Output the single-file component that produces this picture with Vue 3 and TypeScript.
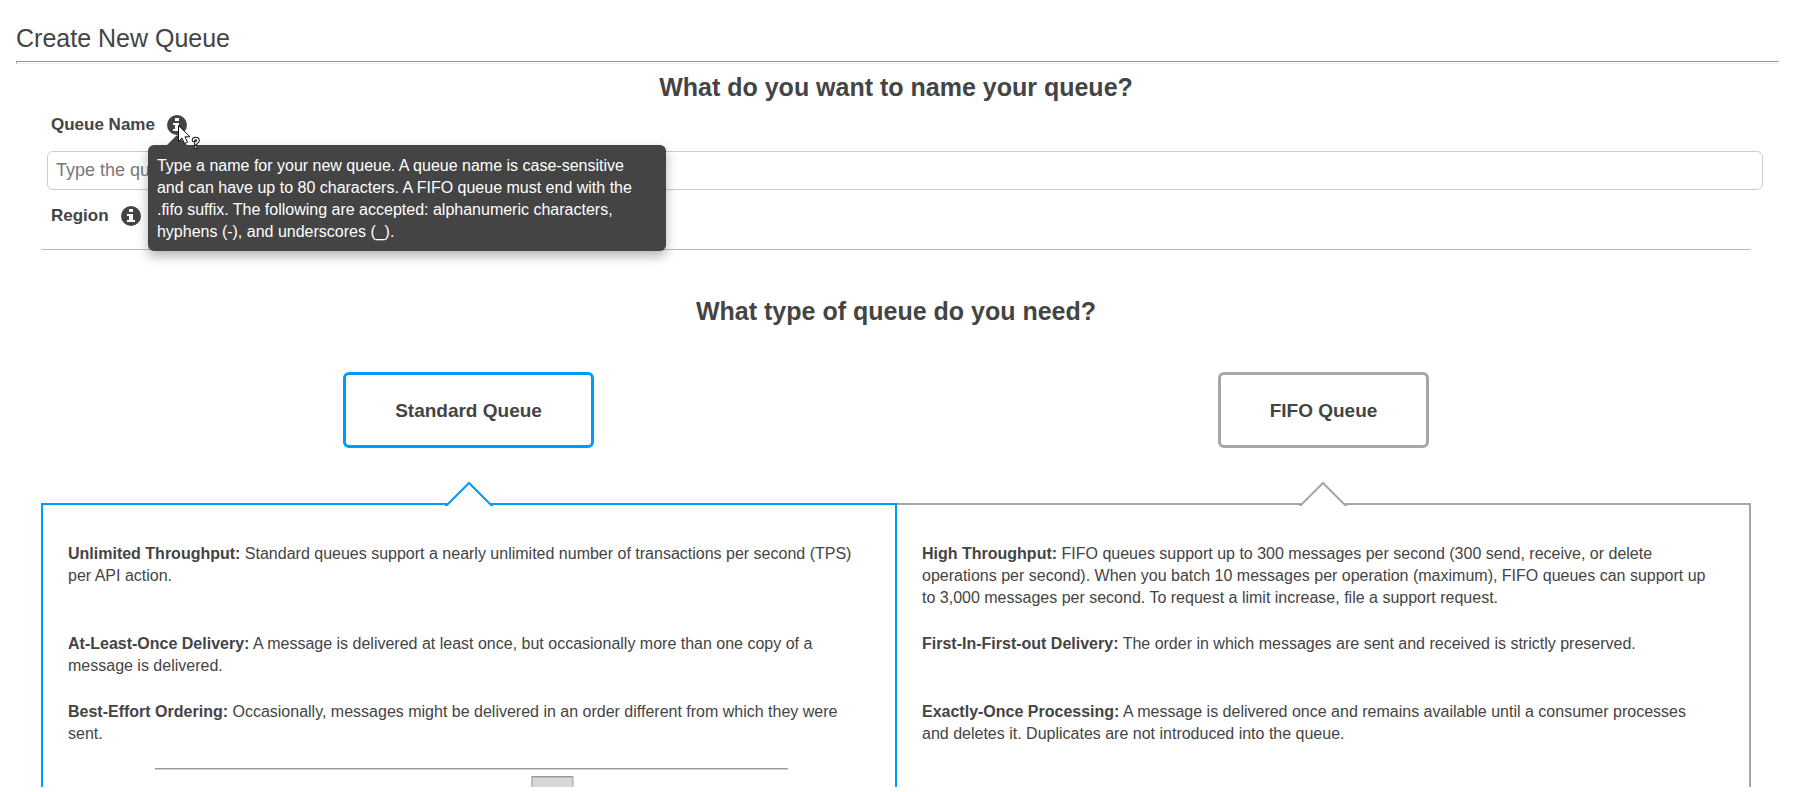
<script setup lang="ts">
import { ref } from 'vue'

type QueueType = 'standard' | 'fifo'

interface Feature {
  term: string
  text: string
}

interface QueueOption {
  id: QueueType
  label: string
  features: Feature[]
}

const queueName = ref('')
const selected = ref<QueueType>('standard')

const options: QueueOption[] = [
  {
    id: 'standard',
    label: 'Standard Queue',
    features: [
      {
        term: 'Unlimited Throughput:',
        text: 'Standard queues support a nearly unlimited number of transactions per second (TPS) per API action.',
      },
      {
        term: 'At-Least-Once Delivery:',
        text: 'A message is delivered at least once, but occasionally more than one copy of a message is delivered.',
      },
      {
        term: 'Best-Effort Ordering:',
        text: 'Occasionally, messages might be delivered in an order different from which they were sent.',
      },
    ],
  },
  {
    id: 'fifo',
    label: 'FIFO Queue',
    features: [
      {
        term: 'High Throughput:',
        text: 'FIFO queues support up to 300 messages per second (300 send, receive, or delete operations per second). When you batch 10 messages per operation (maximum), FIFO queues can support up to 3,000 messages per second. To request a limit increase, file a support request.',
      },
      {
        term: 'First-In-First-out Delivery:',
        text: 'The order in which messages are sent and received is strictly preserved.',
      },
      {
        term: 'Exactly-Once Processing:',
        text: 'A message is delivered once and remains available until a consumer processes and deletes it. Duplicates are not introduced into the queue.',
      },
    ],
  },
]
</script>

<template>
  <div class="page">
    <header class="page-header">
      <h1>Create New Queue</h1>
      <hr class="inset-rule" />
    </header>

    <main>
      <section class="name-section">
        <h2>What do you want to name your queue?</h2>
        <div class="field-label">
          <label for="queue-name">Queue Name</label>
          <span class="help">
            <button type="button" class="info" aria-label="About queue name" aria-describedby="name-tip">
              <svg viewBox="0 0 20 20" width="20" height="20" aria-hidden="true">
                <circle cx="10" cy="10" r="10" fill="#444" />
                <path d="M8 3h4v3H8zM6 8h6v6h2v2H6v-2h2v-4H6z" fill="#fff" />
              </svg>
            </button>
            <span id="name-tip" class="tooltip" role="tooltip">
              Type a name for your new queue. A queue name is case-sensitive and can have up to 80 characters. A FIFO
              queue must end with the .fifo suffix. The following are accepted: alphanumeric characters, hyphens (-),
              and underscores (_).
            </span>
            <svg class="pointer" viewBox="0 0 24 26" width="24" height="26" aria-hidden="true">
              <path d="M.5 .5v16l3.500-3.500 2.500 5.500 3-1.300-2.500-5.400h5z" fill="#fff" stroke="#111" />
              <g fill="none" stroke-linecap="round" stroke-linejoin="round">
                <path d="M15.500 15.500c0-2.700 4.500-2.700 4.500 0 0 1.600-2.300 1.700-2.300 3.300M17.700 21.900v.2" stroke="#111" stroke-width="3.600" />
                <path d="M15.500 15.500c0-2.700 4.500-2.700 4.500 0 0 1.600-2.300 1.700-2.300 3.300M17.700 21.900v.2" stroke="#fff" stroke-width="1.600" />
              </g>
            </svg>
          </span>
        </div>
        <input id="queue-name" v-model="queueName" type="text" placeholder="Type the queue name" />
        <div class="field-label region">
          <span>Region</span>
          <button type="button" class="info" aria-label="About region">
            <svg viewBox="0 0 20 20" width="20" height="20" aria-hidden="true">
              <circle cx="10" cy="10" r="10" fill="#444" />
              <path d="M8 3h4v3H8zM6 8h6v6h2v2H6v-2h2v-4H6z" fill="#fff" />
            </svg>
          </button>
        </div>
      </section>

      <section>
        <h2>What type of queue do you need?</h2>
        <div class="choices">
          <div v-for="option in options" :key="option.id" class="choice">
            <button
              type="button"
              class="choice-button"
              :class="{ active: selected === option.id }"
              :aria-pressed="selected === option.id"
              @click="selected = option.id"
            >
              {{ option.label }}
            </button>
          </div>
        </div>

        <div class="panels">
          <article
            v-for="option in options"
            :key="option.id"
            class="panel"
            :class="{ active: selected === option.id }"
          >
            <svg class="notch" viewBox="0 0 50 26" width="50" height="26" aria-hidden="true">
              <path d="M3 23L25 1l22 22v3H3z" fill="#fff" />
              <path d="M1 24h2L25 2l22 22h2" fill="none" stroke="currentColor" stroke-width="2" />
            </svg>
            <p v-for="feature in option.features" :key="feature.term">
              <strong>{{ feature.term }}</strong> {{ feature.text }}
            </p>
            <svg
              v-if="option.id === 'standard'"
              class="diagram"
              viewBox="0 0 634 19"
              preserveAspectRatio="xMidYMin slice"
              aria-hidden="true"
            >
              <path d="M0 .5h634" stroke="#999" />
              <path d="M0 1.500h634" stroke="#d0d0d0" />
              <rect x="377.500" y="8.500" width="41" height="30" fill="#d8d8d8" stroke="#999" />
              <path d="M378 9.500h40" stroke="#bbb" />
            </svg>
          </article>
        </div>
      </section>
    </main>
  </div>
</template>

<style>
body {
  margin: 0;
  background: #fff;
}
</style>

<style scoped>
.page {
  font-family: 'Liberation Sans', Arial, sans-serif;
  font-size: 16px;
  line-height: 22px;
  color: #444;
}

.page-header {
  padding: 23px 23px 0 16px;
}

h1 {
  margin: 0 0 8px;
  font-size: 25px;
  font-weight: 400;
  line-height: 30px;
}

.inset-rule {
  margin: 0;
  height: 1px;
  border: 1px solid;
  border-color: #999 #eee #eee #999;
}

main {
  padding: 7px 51px 0 41px;
}

h2 {
  margin: 0;
  font-size: 25px;
  font-weight: 700;
  line-height: 32px;
  text-align: center;
}

.name-section {
  margin-bottom: 45px;
  padding-bottom: 22px;
  border-bottom: 1px solid #bbb;
}

.field-label {
  display: flex;
  align-items: center;
  gap: 12px;
  margin: 11px 0 15px 10px;
  font-size: 17px;
  font-weight: 700;
}

.field-label.region {
  margin: 15px 0 0 10px;
}

.help {
  position: relative;
  display: flex;
}

.info {
  display: flex;
  padding: 0;
  border: 0;
  border-radius: 50%;
  background: none;
  cursor: help;
}

.tooltip {
  position: absolute;
  z-index: 1;
  top: 30px;
  left: -19px;
  box-sizing: border-box;
  width: 518px;
  padding: 10px 24px 8px 9px;
  border-radius: 6px;
  background: #444;
  box-shadow: 0 5px 12px rgba(0, 0, 0, 0.3);
  color: #fff;
  font-size: 16px;
  font-weight: 400;
}

.tooltip::before {
  content: '';
  position: absolute;
  bottom: 100%;
  left: 19px;
  border: 10px solid transparent;
  border-top: 0;
  border-bottom-color: #444;
}

.pointer {
  position: absolute;
  z-index: 2;
  top: 10px;
  left: 11px;
}

input {
  display: block;
  box-sizing: border-box;
  width: calc(100% + 6px);
  height: 39px;
  margin: 0 0 0 6px;
  padding: 0 8px;
  border: 1px solid #ccc;
  border-radius: 6px;
  background: #fff;
  color: #444;
  font: inherit;
  font-size: 18px;
}

input::placeholder {
  color: #777;
  opacity: 1;
}

.choices {
  display: grid;
  grid-template-columns: 1fr 1fr;
  margin: 45px 0 55px;
}

.choice {
  display: flex;
  justify-content: center;
}

.choice-button {
  padding: 25px 49px 23px;
  border: 3px solid #a6a6a6;
  border-radius: 6px;
  background: #fff;
  color: #444;
  font: inherit;
  font-size: 19px;
  font-weight: 700;
  cursor: pointer;
}

.panels {
  display: grid;
  grid-template-columns: calc(50% + 1px) 1fr;
  grid-template-rows: repeat(4, auto);
}

.panel {
  position: relative;
  display: grid;
  grid-row: span 4;
  grid-template-rows: subgrid;
  padding: 38px 36px 0 25px;
  border-top: 2px solid #a6a6a6;
  border-right: 2px solid #a6a6a6;
  color: #444;
}

.panel:first-child {
  border-left: 2px solid #a6a6a6;
}

.panel.active {
  border-color: #0099ff;
}

.panel p {
  margin: 0 0 24px;
}

.panel p:last-of-type {
  margin-bottom: 23px;
}

.notch {
  position: absolute;
  top: -24px;
  left: calc(50% - 25px);
  color: #a6a6a6;
}

.active .notch {
  color: #0099ff;
}

.choice-button.active {
  border-color: #0099ff;
}

.diagram {
  width: 80%;
  height: 19px;
  margin-left: 11%;
}
</style>
